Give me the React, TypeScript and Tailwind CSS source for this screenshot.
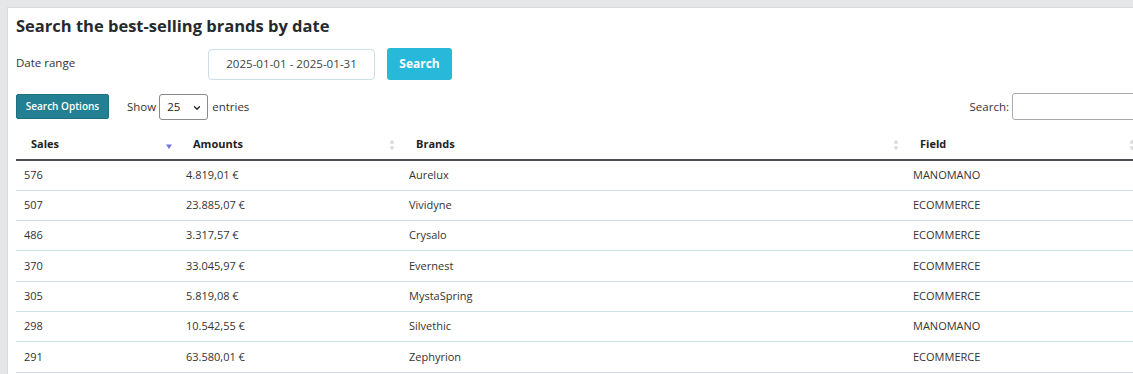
import { ChevronDown } from 'lucide-react';

const rows = [
  { sales: 576, amount: '4.819,01 €', brand: 'Aurelux', field: 'MANOMANO' },
  { sales: 507, amount: '23.885,07 €', brand: 'Vividyne', field: 'ECOMMERCE' },
  { sales: 486, amount: '3.317,57 €', brand: 'Crysalo', field: 'ECOMMERCE' },
  { sales: 370, amount: '33.045,97 €', brand: 'Evernest', field: 'ECOMMERCE' },
  { sales: 305, amount: '5.819,08 €', brand: 'MystaSpring', field: 'ECOMMERCE' },
  { sales: 298, amount: '10.542,55 €', brand: 'Silvethic', field: 'MANOMANO' },
  { sales: 291, amount: '63.580,01 €', brand: 'Zephyrion', field: 'ECOMMERCE' },
];

function SortBoth() {
  return (
    <svg width="8" height="14" viewBox="0 0 8 14" className="mt-[2px] shrink-0">
      <path d="M4 1.5 L6.5 5.5 H1.5 Z" fill="#d6d6d6" />
      <path d="M4 12.5 L6.5 8.5 H1.5 Z" fill="#d6d6d6" />
    </svg>
  );
}

function SortDesc() {
  return (
    <svg width="8" height="14" viewBox="0 0 8 14" className="mt-[2px] shrink-0">
      <path d="M4 11 L7 6.5 H1 Z" fill="#7277dc" />
    </svg>
  );
}

function HeadCell({ label, sort }: { label: string; sort: 'desc' | 'both' }) {
  return (
    <th className="h-[31px] p-0 text-left font-bold">
      <div className="flex items-center justify-between pl-[15px] pr-[5px]">
        <span>{label}</span>
        {sort === 'desc' ? <SortDesc /> : <SortBoth />}
      </div>
    </th>
  );
}

export default function App() {
  return (
    <div
      className="h-[374px] w-full overflow-hidden bg-[#e5e6e8] pl-[7px] pt-[7px] text-[#333]"
      style={{ fontFamily: '"Open Sans", "Liberation Sans", sans-serif' }}
    >
      <div className="h-full w-[1150px] border-t border-l border-[#d9dadc] bg-white px-2">
        <h1 className="mt-[6px] text-[16.5px] font-bold leading-[24px] text-[#262a2e]">
          Search the best-selling brands by date
        </h1>

        <div className="mt-[10px] flex items-center">
          <label className="-mt-[2px] w-[192px] text-[11.5px] leading-none text-[#333]">Date range</label>
          <div className="flex h-[31px] w-[167px] items-center justify-center rounded-[4px] border border-[#cbdde5] text-[11.6px] text-[#444]">
            2025-01-01 - 2025-01-31
          </div>
          <button className="ml-3 h-[32px] w-[65px] rounded-[3px] bg-[#27b8da] text-[12px] font-bold text-white">
            Search
          </button>
        </div>

        <div className="mt-[13px] flex items-center">
          <button className="h-[25px] w-[93px] rounded-[2px] border border-[#1e6f80] bg-[#237f92] text-[10px] font-semibold text-white">
            Search Options
          </button>
          <span className="ml-[18px] text-[11.5px]">Show</span>
          <div className="relative ml-[3px] flex h-[26px] w-[49px] items-center rounded-[3px] border border-[#8a8a8a] pl-[7px] text-[11.5px] text-[#222]">
            25
            <ChevronDown className="absolute right-[5px] top-[8px] h-[10px] w-[10px]" strokeWidth={3} />
          </div>
          <span className="ml-[4px] text-[11.5px]">entries</span>
          <div className="ml-auto flex items-center">
            <span className="text-[11.5px]">Search:</span>
            <div className="ml-[3px] h-[27px] w-[137px] rounded-[3px] border border-[#aaa]" />
          </div>
        </div>

        <table className="mt-[9px] w-[1125px] table-fixed border-collapse text-[11px]">
          <colgroup>
            <col className="w-[162px]" />
            <col className="w-[223px]" />
            <col className="w-[504px]" />
            <col className="w-[236px]" />
          </colgroup>
          <thead>
            <tr className="border-b-2 border-[#4a4e52] text-[#222]">
              <HeadCell label="Sales" sort="desc" />
              <HeadCell label="Amounts" sort="both" />
              <HeadCell label="Brands" sort="both" />
              <HeadCell label="Field" sort="both" />
            </tr>
          </thead>
          <tbody>
            {rows.map((r) => (
              <tr key={r.sales} className="h-[30.3px] border-b border-[#cfdfe6]">
                <td className="px-2">{r.sales}</td>
                <td className="px-2">{r.amount}</td>
                <td className="px-2">{r.brand}</td>
                <td className="px-2">{r.field}</td>
              </tr>
            ))}
          </tbody>
        </table>
      </div>
    </div>
  );
}
